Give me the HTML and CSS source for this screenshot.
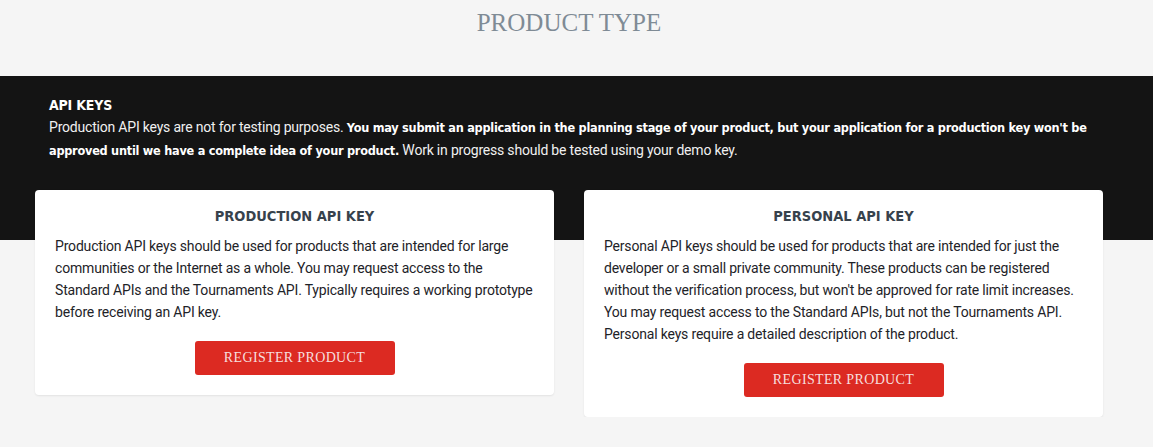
FILE: index.html
```html
<!DOCTYPE html>
<html lang="en">
<head>
<meta charset="utf-8">
<title>Product Type</title>
<link rel="stylesheet" href="styles.css">
</head>
<body>
<div class="page">
  <h1 class="page-title">PRODUCT TYPE</h1>
  <section class="band">
    <div class="band-inner">
      <h2 class="band-title">API KEYS</h2>
      <p class="band-text">Production API keys are not for testing purposes. <strong>You may submit an application in the planning stage of your product, but your application for a production key won't be approved until we have a complete idea of your product.</strong> Work in progress should be tested using your demo key.</p>
    </div>
  </section>
  <div class="cards">
    <div class="card">
      <h3 class="card-title">PRODUCTION API KEY</h3>
      <p class="card-text">Production API keys should be used for products that are intended for large communities or the Internet as a whole. You may request access to the Standard APIs and the Tournaments API. Typically requires a working prototype before receiving an API key.</p>
      <a class="btn" href="#">REGISTER PRODUCT</a>
    </div>
    <div class="card">
      <h3 class="card-title">PERSONAL API KEY</h3>
      <p class="card-text">Personal API keys should be used for products that are intended for just the developer or a small private community. These products can be registered without the verification process, but won't be approved for rate limit increases. You may request access to the Standard APIs, but not the Tournaments API. Personal keys require a detailed description of the product.</p>
      <a class="btn" href="#">REGISTER PRODUCT</a>
    </div>
  </div>
</div>
</body>
</html>
```
FILE: styles.css
```css
html, body {
  margin: 0;
  padding: 0;
  background: #f5f5f5;
}
body {
  font-family: Roboto, "Noto Sans", sans-serif;
  color: #1e2328;
}
.page {
  width: 1138px;
}
.page-title {
  margin: 0;
  height: 76px;
  padding-top: 9px;
  box-sizing: border-box;
  text-align: center;
  font-family: "Liberation Serif", serif;
  font-weight: normal;
  font-size: 25px;
  letter-spacing: 0;
  color: #7f8b95;
}
.band {
  background: #141414;
  width: 1153px;
  height: 164px;
}
.band-inner {
  padding: 20px 49px 0;
  color: #f0f0f0;
}
.band-title {
  margin: 0;
  font-family: "DejaVu Sans Condensed", "DejaVu Sans", sans-serif;
  font-weight: bold;
  font-size: 14px;
  line-height: 18px;
  letter-spacing: -0.2px;
  color: #fff;
}
.band-text {
  margin: 2px 0 0;
  font-size: 14px;
  line-height: 22px;
  letter-spacing: -0.2px;
}
.band-text strong {
  font-family: "DejaVu Sans Condensed", "DejaVu Sans", sans-serif;
  font-size: 12.6px;
  letter-spacing: -0.25px;
  color: #fff;
}
.cards {
  display: flex;
  align-items: flex-start;
  gap: 30px;
  padding: 0 35px;
  margin-top: -50px;
}
.card {
  flex: 1;
  background: #fff;
  border-radius: 4px;
  box-shadow: 0 1px 2px rgba(0,0,0,0.08);
  padding: 16px 20px 20px;
  display: flex;
  flex-direction: column;
  align-items: center;
}
.card-title {
  margin: 0;
  font-family: "DejaVu Sans Condensed", "DejaVu Sans", sans-serif;
  font-weight: bold;
  font-size: 14.5px;
  line-height: 20px;
  letter-spacing: 0;
  color: #37424c;
}
.card-text {
  margin: 9px 0 0;
  align-self: stretch;
  font-size: 14px;
  line-height: 22px;
  letter-spacing: -0.18px;
  color: #1e2328;
}
.btn {
  margin-top: 18px;
  width: 200px;
  height: 34px;
  line-height: 34px;
  background: #dc2a22;
  border-radius: 3px;
  text-align: center;
  text-decoration: none;
  font-family: "Liberation Serif", serif;
  font-size: 14px;
  letter-spacing: 0.35px;
  color: #f6dede;
}
```
